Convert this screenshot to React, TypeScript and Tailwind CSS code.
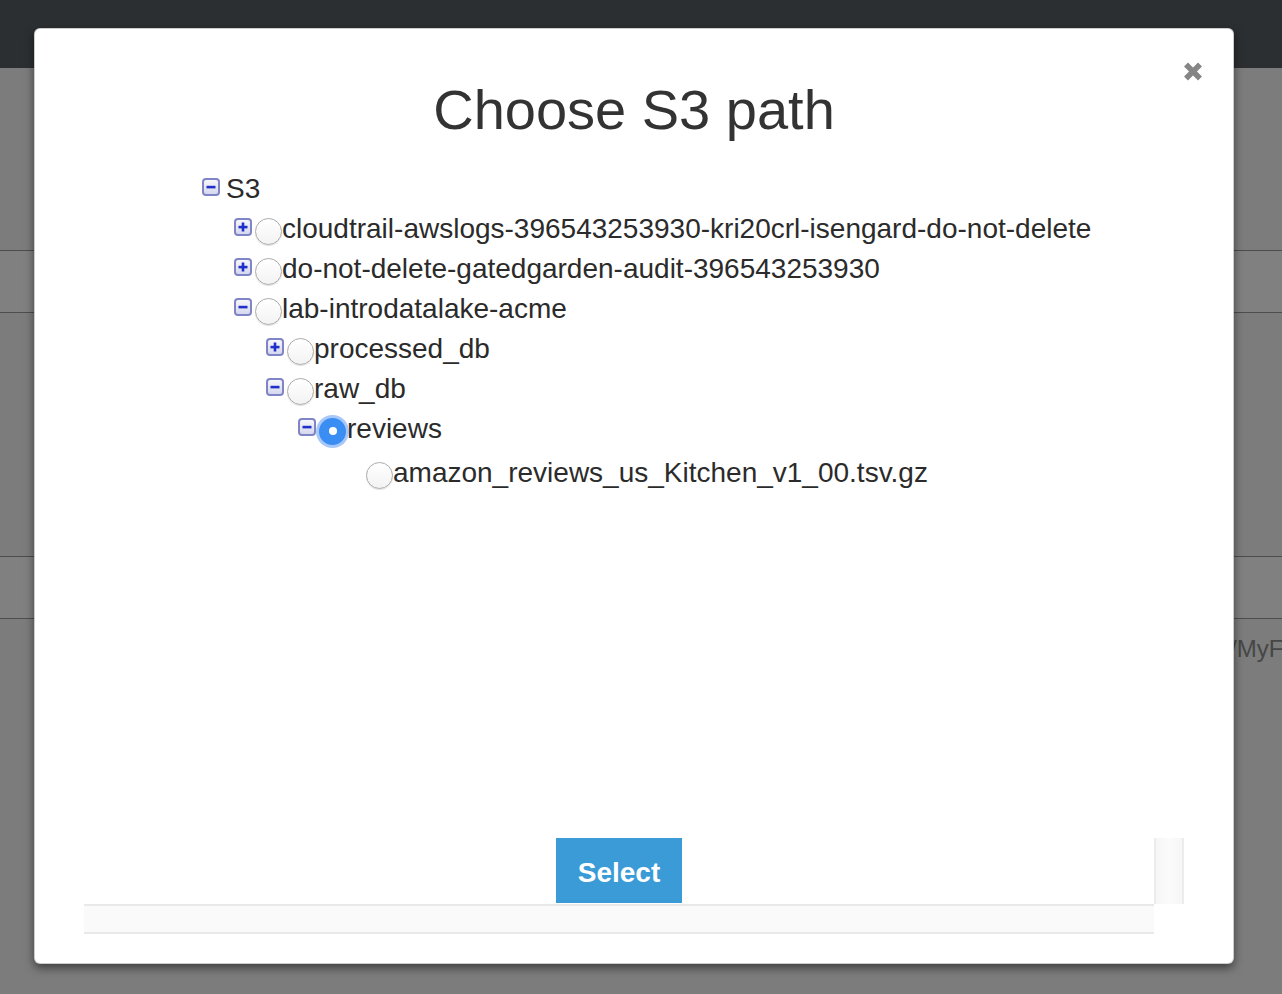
import React from "react";

type Row = {
  level: number;
  exp?: "plus" | "minus";
  radio: boolean;
  label: string;
  selected?: boolean;
  leaf?: boolean;
};

const rows: Row[] = [
  { level: 0, exp: "minus", radio: false, label: "S3" },
  { level: 1, exp: "plus", radio: true, label: "cloudtrail-awslogs-396543253930-kri20crl-isengard-do-not-delete" },
  { level: 1, exp: "plus", radio: true, label: "do-not-delete-gatedgarden-audit-396543253930" },
  { level: 1, exp: "minus", radio: true, label: "lab-introdatalake-acme" },
  { level: 2, exp: "plus", radio: true, label: "processed_db" },
  { level: 2, exp: "minus", radio: true, label: "raw_db" },
  { level: 3, exp: "minus", radio: true, label: "reviews", selected: true },
  { level: 4, radio: true, label: "amazon_reviews_us_Kitchen_v1_00.tsv.gz", leaf: true },
];

const levelPad = ["pl-0", "pl-[32px]", "pl-[64px]", "pl-[96px]", "pl-[164px]"];

function Expander({ kind }: { kind: "plus" | "minus" }) {
  return (
    <div className="-translate-y-[2px] w-[18px] h-[18px] shrink-0 rounded-[4px] border-2 border-[#8085c8] bg-gradient-to-b from-[#f7f7fc] to-[#d6d8ee] flex items-center justify-center">
      <svg width="12" height="12" viewBox="0 0 12 12">
        <rect x="1.5" y="4.8" width="9" height="2.6" fill="#1f2fcc" />
        {kind === "plus" && <rect x="4.7" y="1.5" width="2.6" height="9" fill="#1f2fcc" />}
      </svg>
    </div>
  );
}

function Radio({ selected }: { selected?: boolean }) {
  if (selected) {
    return (
      <div className="translate-y-[2px] w-[27px] h-[27px] shrink-0 rounded-full flex items-center justify-center bg-[#3a8df3] shadow-[0_0_0_3px_rgba(120,170,245,0.65)]">
        <div className="w-[8px] h-[8px] rounded-full bg-white" />
      </div>
    );
  }
  return (
    <div className="translate-y-[2px] w-[27px] h-[27px] shrink-0 rounded-full border border-[#ababab] bg-gradient-to-b from-white to-[#f3f3f3] shadow-[0_1px_1px_rgba(0,0,0,0.12)]" />
  );
}

export default function App() {
  return (
    <div
      className="relative w-full h-[994px] overflow-hidden bg-[#7b7c7b]"
      style={{ fontFamily: '"Liberation Sans", Arial, Helvetica, sans-serif' }}
    >
      {/* background page (dimmed) */}
      <div className="flex flex-col">
        <div className="h-[68px] bg-[#2b2f31]" />
        <div className="h-[182px]" />
        <div className="h-px bg-[#4c4d4c]" />
        <div className="h-[61px] bg-[#7f807f]" />
        <div className="h-px bg-[#4c4d4c]" />
        <div className="h-[243px]" />
        <div className="h-px bg-[#4c4d4c]" />
        <div className="h-[61px] bg-[#7f807f]" />
        <div className="h-px bg-[#4c4d4c]" />
        <div className="mt-[16px] pl-[1230px] text-[24px] leading-[28px] text-[#464746] whitespace-nowrap">
          /MyFolder/
        </div>
      </div>

      {/* modal */}
      <div className="absolute left-[34px] top-[28px] w-[1200px] h-[936px] bg-white rounded-[6px] border border-black/20 shadow-[0_4px_10px_rgba(0,0,0,0.5)] flex flex-col">
        <button className="absolute top-[32px] right-[29px] w-[22px] h-[21px]" aria-label="Close">
          <svg width="22" height="21" viewBox="0 0 22 21">
            <line x1="4" y1="3.5" x2="18" y2="17.5" stroke="#858585" strokeWidth="5.5" />
            <line x1="18" y1="3.5" x2="4" y2="17.5" stroke="#858585" strokeWidth="5.5" />
          </svg>
        </button>

        <h1 className="pt-[50px] text-center text-[56px] leading-[62px] text-[#333333] font-normal">
          Choose S3 path
        </h1>

        <div className="mt-[28px] pl-[167px] flex flex-col text-[28px] text-[#2b2b2b]">
          {rows.map((r, i) => (
            <div
              key={i}
              className={`flex items-center h-[40px] whitespace-nowrap ${levelPad[r.level]} ${r.leaf ? "mt-[4px]" : ""}`}
            >
              {r.exp && <Expander kind={r.exp} />}
              {r.radio ? (
                <div className={`flex items-center ${r.exp ? "ml-[3px]" : ""}`}>
                  <Radio selected={r.selected} />
                  <span className={r.selected ? "ml-[1px]" : ""}>{r.label}</span>
                </div>
              ) : (
                <span className="ml-[6px]">{r.label}</span>
              )}
            </div>
          ))}
        </div>

        <div className="flex-1" />

        <div className="mx-[49px] mb-[29px] flex">
          <div className="w-[1070px] flex flex-col">
            <div className="h-[66px] flex justify-center">
              <button className="w-[126px] h-[65px] pt-[4px] bg-[#3a9bd6] text-white font-bold text-[28px]">
                Select
              </button>
            </div>
            <div className="h-[30px] border-y-2 border-[#e9e9e9] bg-[#fafafa]" />
          </div>
          <div className="w-[30px] h-[66px] border-x-2 border-[#ececec] bg-gradient-to-r from-[#f6f6f6] via-[#fbfbfb] to-[#f6f6f6]" />
        </div>
      </div>
    </div>
  );
}
